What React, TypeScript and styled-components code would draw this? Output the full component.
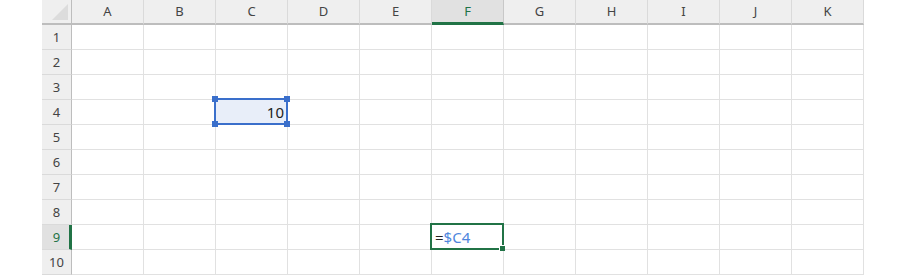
import React from "react";
import styled, { createGlobalStyle, css } from "styled-components";

const Global = createGlobalStyle`
  html, body { margin: 0; padding: 0; background: #ffffff; }
  body { font-family: "Noto Sans", "Liberation Sans", sans-serif; }
`;

const Page = styled.div`
  width: 904px;
  height: 275px;
  overflow: hidden;
  background: #fff;
  padding-left: 42px;
  box-sizing: border-box;
`;

const Sheet = styled.div`
  display: grid;
  grid-template-columns: 30px repeat(11, 72px);
  grid-template-rows: 25px repeat(10, 25px);
  width: max-content;
`;

const Corner = styled.div`
  position: relative;
  background: #efefef;
  border-right: 1px solid #bdbdbd;
  border-bottom: 2px solid #bdbdbd;
  box-sizing: border-box;
`;

const Triangle = styled.svg`
  position: absolute;
  right: 3px;
  bottom: 3px;
`;

const ColHead = styled.div<{ $active?: boolean }>`
  display: flex;
  align-items: center;
  justify-content: center;
  background: #efefef;
  border-right: 1px solid #dadada;
  border-bottom: 2px solid #bdbdbd;
  box-sizing: border-box;
  font-size: 13px;
  color: #444;
  padding-bottom: 2px;
  ${(p) =>
    p.$active &&
    css`
      background: #e1e1e1;
      border-bottom: 3px solid #217346;
      color: #217346;
      padding-bottom: 1px;
      border-right-color: #c8c8c8;
    `}
`;

const RowHead = styled.div<{ $active?: boolean }>`
  display: flex;
  align-items: center;
  justify-content: center;
  background: #efefef;
  border-right: 1px solid #bdbdbd;
  border-bottom: 1px solid #dadada;
  box-sizing: border-box;
  font-size: 13px;
  color: #444;
  ${(p) =>
    p.$active &&
    css`
      background: #e1e1e1;
      border-right: 3px solid #217346;
      padding-left: 2px;
      color: #217346;
    `}
`;

const Cell = styled.div<{ $tint?: boolean }>`
  position: relative;
  display: flex;
  align-items: center;
  justify-content: flex-end;
  padding: 0 3px;
  background: ${(p) => (p.$tint ? "#e8eef9" : "#fff")};
  border-right: 1px solid #e1e1e1;
  border-bottom: 1px solid #e1e1e1;
  box-sizing: border-box;
  font-size: 15px;
  color: #222;
`;

const FormulaCell = styled(Cell)`
  justify-content: flex-start;
  padding-left: 3px;
`;

const Ref = styled.span`
  color: #4e86dd;
`;

const Frame = styled.div<{ $color: string }>`
  position: absolute;
  left: -2px;
  top: -2px;
  right: -1px;
  bottom: -1px;
  border: 2px solid ${(p) => p.$color};
  pointer-events: none;
  z-index: 2;
`;

const Handle = styled.span<{ $color: string; $x: "l" | "r"; $y: "t" | "b" }>`
  position: absolute;
  width: 6px;
  height: 6px;
  background: ${(p) => p.$color};
  ${(p) => (p.$x === "l" ? "left: -4px;" : "right: -4px;")}
  ${(p) => (p.$y === "t" ? "top: -4px;" : "bottom: -4px;")}
  z-index: 3;
`;

const FillHandle = styled.span`
  position: absolute;
  width: 5px;
  height: 5px;
  right: -3px;
  bottom: -3px;
  background: #217346;
  border-left: 1px solid #fff;
  border-top: 1px solid #fff;
  z-index: 3;
`;

const cols = ["A", "B", "C", "D", "E", "F", "G", "H", "I", "J", "K"];
const BLUE = "#3a6fcb";
const GREEN = "#217346";

export default function App() {
  return (
    <>
      <Global />
      <Page>
        <Sheet>
          <Corner>
            <Triangle width="16" height="16" viewBox="0 0 16 16">
              <polygon points="16,0 16,16 0,16" fill="#dcdcdc" />
            </Triangle>
          </Corner>
          {cols.map((c) => (
            <ColHead key={c} $active={c === "F"}>
              {c}
            </ColHead>
          ))}
          {Array.from({ length: 10 }, (_, i) => {
            const r = i + 1;
            return (
              <React.Fragment key={r}>
                <RowHead $active={r === 9}>{r}</RowHead>
                {cols.map((c) => {
                  if (r === 4 && c === "C") {
                    return (
                      <Cell key={c} $tint>
                        10
                        <Frame $color={BLUE}>
                          <Handle $color={BLUE} $x="l" $y="t" />
                          <Handle $color={BLUE} $x="r" $y="t" />
                          <Handle $color={BLUE} $x="l" $y="b" />
                          <Handle $color={BLUE} $x="r" $y="b" />
                        </Frame>
                      </Cell>
                    );
                  }
                  if (r === 9 && c === "F") {
                    return (
                      <FormulaCell key={c}>
                        =<Ref>$C4</Ref>
                        <Frame $color={GREEN}>
                          <FillHandle />
                        </Frame>
                      </FormulaCell>
                    );
                  }
                  return <Cell key={c} />;
                })}
              </React.Fragment>
            );
          })}
        </Sheet>
      </Page>
    </>
  );
}
